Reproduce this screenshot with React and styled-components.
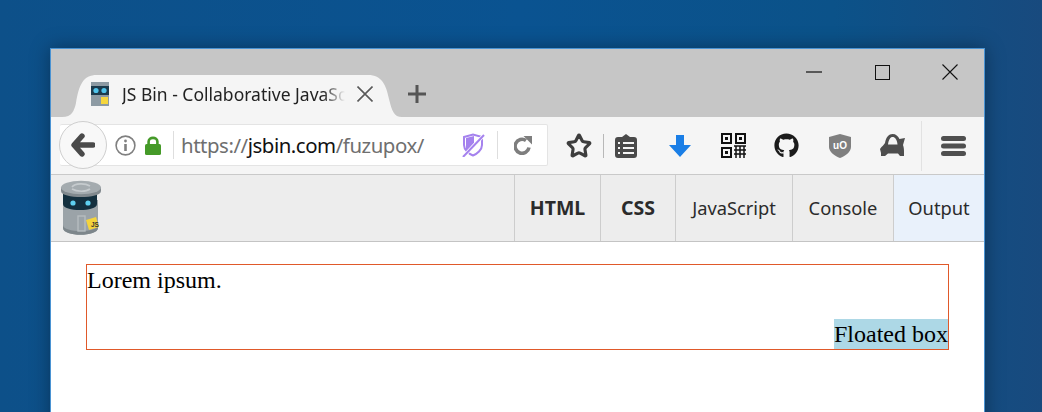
import React from 'react';
import styled, { createGlobalStyle } from 'styled-components';
import { FaGithub } from 'react-icons/fa';
import { Star } from 'lucide-react';

const Global = createGlobalStyle`
  html, body {
    margin: 0;
    padding: 0;
    height: 412px;
    overflow: hidden;
  }
`;

const Desktop = styled.div`
  width: 1042px;
  height: 412px;
  box-sizing: border-box;
  padding: 48px 0 0 50px;
  overflow: hidden;
  background: linear-gradient(90deg, #0d5089 0%, #0a5391 50%, #0b5289 80%, #184a7e 100%);
`;

const Win = styled.div`
  width: 935px;
  height: 420px;
  box-sizing: border-box;
  border: 1px solid #4a93d3;
  border-bottom: 0;
  background: #fff;
  box-shadow: 0 0 18px rgba(0, 0, 0, 0.35);
  display: flex;
  flex-direction: column;
`;

const TitleBar = styled.div`
  height: 68px;
  flex: none;
  background: #c6c6c6;
  display: flex;
  align-items: flex-end;
  padding-left: 11px;
`;

const Tab = styled.div`
  width: 340px;
  height: 42px;
  flex: none;
  box-sizing: border-box;
  background: #f5f5f5;
  clip-path: path('M0 42 C10 42 12 36 14 28 C17 10 21 0 35 0 H306 C320 0 324 10 327 24 C330 36 332 42 340 42 Z');
  display: flex;
  align-items: center;
  padding: 0 0 4px 29px;
`;

const TabTitle = styled.span`
  width: 223px;
  margin-left: 13px;
  font: 17.5px/24px 'Noto Sans', sans-serif;
  color: #222;
  white-space: nowrap;
  -webkit-mask-image: linear-gradient(90deg, #000 90%, transparent 100%);
  mask-image: linear-gradient(90deg, #000 90%, transparent 100%);
`;

const NewTab = styled.div`
  width: 28px;
  height: 42px;
  margin-left: 1px;
  display: flex;
  align-items: center;
  justify-content: center;
  padding-bottom: 4px;
  box-sizing: border-box;
`;

const WinControls = styled.div`
  margin-left: auto;
  align-self: flex-start;
  display: flex;
  padding: 14px 0 0 0;
`;

const WinBtn = styled.div`
  width: 68px;
  height: 18px;
  display: flex;
  align-items: center;
  justify-content: center;
`;

const Nav = styled.div`
  height: 58px;
  flex: none;
  box-sizing: border-box;
  background: #f5f5f5;
  border-bottom: 1px solid #c9c9c9;
  display: flex;
  align-items: center;
  padding-left: 9px;
`;

const UrlBar = styled.div`
  width: 488px;
  height: 42px;
  flex: none;
  margin-top: -1px;
  box-sizing: border-box;
  background: #fff;
  border: 1px solid #e4e4e4;
  border-left: 0;
  border-radius: 2px;
  display: flex;
  align-items: center;
`;

const Back = styled.div`
  width: 48px;
  height: 48px;
  flex: none;
  box-sizing: border-box;
  margin-left: -1px;
  border: 1px solid #cfcfcf;
  border-radius: 50%;
  background: #f8f8f8;
  display: flex;
  align-items: center;
  justify-content: center;
`;

const UrlIcons = styled.div`
  display: flex;
  align-items: center;
  gap: 9px;
  margin-left: 8px;
`;

const VLine = styled.div`
  width: 1px;
  height: ${(p) => p.$h || 28}px;
  flex: none;
  margin-left: ${(p) => p.$ml || 0}px;
  background: ${(p) => p.$c || '#dedede'};
`;

const Url = styled.div`
  width: 280px;
  margin-left: 7px;
  font: 20.4px/28px 'Noto Sans', sans-serif;
  color: #6f6f6f;
  white-space: nowrap;
  letter-spacing: -0.45px;
  b {
    font-weight: 400;
    color: #111;
  }
`;

const Slot = styled.div`
  width: ${(p) => p.$w || 53}px;
  height: 40px;
  flex: none;
  margin-left: ${(p) => p.$ml || 0}px;
  display: flex;
  align-items: center;
  justify-content: center;
`;

const BinBar = styled.div`
  height: 67px;
  flex: none;
  box-sizing: border-box;
  background: #ededed;
  border-bottom: 1px solid #c4c4c4;
  display: flex;
  justify-content: space-between;
  padding-left: 9px;
`;

const Logo = styled.div`
  padding-top: 5px;
`;

const Panels = styled.div`
  display: flex;
  height: 66px;
`;

const Panel = styled.div`
  width: ${(p) => p.$w}px;
  box-sizing: border-box;
  border-left: 1px solid #cdcdcd;
  background: ${(p) => (p.$current ? '#e9f1fb' : 'transparent')};
  font: ${(p) => (p.$on ? '700 19.5px' : '400 18.3px')}/66px 'Noto Sans', sans-serif;
  color: #2b2b2b;
  text-align: center;
`;

const Output = styled.div`
  padding: 22px 35px 0 35px;
`;

const Box = styled.div`
  height: 86px;
  box-sizing: border-box;
  border: 1px solid #e0592a;
  display: flex;
  flex-direction: column;
  justify-content: space-between;
  font: 24px/30px 'Liberation Serif', serif;
  color: #000;
`;

const Floated = styled.div`
  align-self: flex-end;
  background: lightblue;
`;

const Favicon = () => (
  <svg width="18" height="24" viewBox="0 0 18 24">
    <rect width="18" height="24" fill="#8d9aa3" />
    <rect y="4" width="18" height="9" fill="#1c3a4c" />
    <circle cx="5" cy="8.5" r="2.6" fill="#4fc3ea" />
    <circle cx="13" cy="8.5" r="2.6" fill="#4fc3ea" />
    <rect x="10" y="15" width="7" height="7" fill="#f5d63d" />
  </svg>
);

const Cross = ({ size = 16, color = '#555', w = 1.5 }) => (
  <svg width={size} height={size} viewBox="0 0 16 16">
    <path d="M0.5 0.5 L15.5 15.5 M15.5 0.5 L0.5 15.5" stroke={color} strokeWidth={w} fill="none" />
  </svg>
);

const BinLogo = () => (
  <svg width="42" height="56" viewBox="0 0 42 56">
    <path d="M3 20 V48 C3 57 38 57 38 48 V20 Z" fill="#9ba3a8" />
    <path d="M3 45 V48 C3 57 38 57 38 48 V45 C38 53 3 53 3 45 Z" fill="#7d868b" />
    <path d="M3 12 H37 V24 C37 32 3 32 3 24 Z" fill="#14303f" />
    <circle cx="13" cy="23" r="2.6" fill="#5fd0f0" />
    <circle cx="28" cy="23" r="2.6" fill="#5fd0f0" />
    <path d="M1 7 V11 C1 19 41 19 41 11 V7 Z" fill="#81898e" />
    <ellipse cx="21" cy="7.5" rx="20" ry="6.8" fill="#a4abaf" />
    <path d="M12 7 C15 3 25 3 30 6 M30 9 C26 12 17 12 12 9" stroke="#c6cbce" strokeWidth="1.6" fill="none" />
    <rect x="18" y="36" width="7" height="15" fill="none" stroke="#b6bcc0" strokeWidth="1.4" />
    <path d="M26 40 L36 37 L39 47 L29 50 Z" fill="#f4d43c" />
    <text x="31" y="47" fontSize="6.5" fontWeight="700" fontFamily="Liberation Sans, sans-serif" fill="#333">JS</text>
  </svg>
);

const App = () => (
  <Desktop>
    <Global />
    <Win>
      <TitleBar>
        <Tab>
          <Favicon />
          <TabTitle>JS Bin - Collaborative JavaSc</TabTitle>
          <Slot $w={36} $ml={2}>
            <Cross size={16} color="#5a5a5a" w={1.6} />
          </Slot>
        </Tab>
        <NewTab>
          <svg width="18" height="18" viewBox="0 0 18 18">
            <path d="M9 0 V18 M0 9 H18" stroke="#555" strokeWidth="3" />
          </svg>
        </NewTab>
        <WinControls>
          <WinBtn>
            <svg width="16" height="2" viewBox="0 0 16 2">
              <rect width="16" height="1.2" y="0.4" fill="#111" />
            </svg>
          </WinBtn>
          <WinBtn>
            <svg width="15" height="15" viewBox="0 0 15 15">
              <rect x="0.5" y="0.5" width="14" height="14" fill="none" stroke="#111" />
            </svg>
          </WinBtn>
          <WinBtn>
            <Cross size={16} color="#111" w={1.1} />
          </WinBtn>
        </WinControls>
      </TitleBar>

      <Nav>
        <UrlBar>
          <Back>
            <svg width="24" height="24" viewBox="0 0 24 24">
              <path d="M11 3 L3 12 L11 21 M4 12 H22" stroke="#4a4a4a" strokeWidth="5.4" strokeLinecap="round" strokeLinejoin="round" fill="none" />
            </svg>
          </Back>
          <UrlIcons>
            <svg width="21" height="21" viewBox="0 0 21 21">
              <circle cx="10.5" cy="10.5" r="9.4" fill="none" stroke="#808080" strokeWidth="1.6" />
              <circle cx="10.5" cy="6" r="1.4" fill="#808080" />
              <rect x="9.2" y="9" width="2.6" height="7" fill="#808080" />
            </svg>
            <svg width="16" height="19" viewBox="0 0 16 19">
              <path d="M3.6 9 V5.6 C3.6 0.6 12.4 0.6 12.4 5.6 V9" fill="none" stroke="#459a28" strokeWidth="2.6" />
              <rect y="8" width="16" height="11" rx="1.6" fill="#459a28" />
            </svg>
          </UrlIcons>
          <VLine $ml={12} />
          <Url>
            https://<b>jsbin.com</b>/fuzupox/
          </Url>
          <svg width="24" height="24" viewBox="0 0 24 24">
            <path d="M3 4 L12 1.5 L21 4 V12 C21 17 16 21 12 22.5 C8 21 3 17 3 12 Z" fill="none" stroke="#a582ee" strokeWidth="2" />
            <path d="M5 5 L13 3 V10 L5 19 Z" fill="#a582ee" />
            <path d="M2 24 L23 2" stroke="#fff" strokeWidth="3.4" />
            <path d="M2 24 L23 2" stroke="#a582ee" strokeWidth="2" />
          </svg>
          <VLine $ml={12} />
          <Slot $w={49}>
            <svg width="18" height="20" viewBox="0 0 18 20">
              <path d="M15 12.5 A7 7 0 1 1 12 5.5" fill="none" stroke="#7e7e7e" strokeWidth="3.6" />
              <path d="M9.5 1 L18 1 L18 9.5 Z" fill="#7e7e7e" />
            </svg>
          </Slot>
        </UrlBar>

        <Slot $w={38} $ml={12}>
          <Star size={26} color="#3d3d3d" strokeWidth={2.9} strokeLinejoin="round" />
        </Slot>
        <VLine $h={24} $ml={5} $c="#b8b8b8" />
        <Slot $w={44}>
          <svg width="22" height="24" viewBox="0 0 22 24">
            <path d="M11 0 L15 3 H19 Q22 3 22 6 V21 Q22 24 19 24 H3 Q0 24 0 21 V6 Q0 3 3 3 H7 Z" fill="#4a4a4a" />
            <path d="M3 9 H5 M8 9 H19 M3 14 H5 M8 14 H19 M3 19 H5 M8 19 H19" stroke="#f5f5f5" strokeWidth="2" />
          </svg>
        </Slot>
        <Slot $ml={5}>
          <svg width="22" height="22" viewBox="0 0 22 22">
            <path d="M7 0 H15 V10 H22 L11 22 L0 10 H7 Z" fill="#1a7ee6" />
          </svg>
        </Slot>
        <Slot $ml={1}>
          <svg width="25" height="25" viewBox="0 0 25 25" fill="#111">
            <path fillRule="evenodd" d="M0 0 H11 V11 H0 Z M2 2 V9 H9 V2 Z M14 0 H25 V11 H14 Z M16 2 V9 H23 V2 Z M0 14 H11 V25 H0 Z M2 16 V23 H9 V16 Z" />
            <rect x="4" y="4" width="3" height="3" />
            <rect x="18" y="4" width="3" height="3" />
            <rect x="4" y="18" width="3" height="3" />
            <path d="M13 13 H25 M13 17 H25 M13 21 H25 M15 13 V25 M19 13 V25 M23 13 V25" stroke="#111" strokeWidth="1.5" />
          </svg>
        </Slot>
        <Slot>
          <FaGithub size={25} color="#1b1b1b" />
        </Slot>
        <Slot>
          <svg width="22" height="24" viewBox="0 0 22 24">
            <path d="M11 0 L22 3 V13 C22 18 16 22 11 24 C6 22 0 18 0 13 V3 Z" fill="#7f7f7f" />
            <text x="11" y="15" textAnchor="middle" fontSize="10" fontWeight="700" fontFamily="Liberation Sans, sans-serif" fill="#fff">uO</text>
          </svg>
        </Slot>
        <Slot>
          <svg width="25" height="23" viewBox="0 0 25 23">
            <path d="M0 15 C2 12 4 11 5 9 C6 3 9 0 12.5 0 C16 0 18 2 19.5 5 L25 4 L23 11 C24 14 24 16 24 19 V22 H20 L18 19.5 H8 L5 22 H1 V19 Z" fill="#4e4e4e" />
            <path d="M8 10.5 C8.5 5.5 10.5 3 12.5 3 C15 3 17 5.5 17.5 10.5 Z" fill="#f5f5f5" />
          </svg>
        </Slot>
        <VLine $h={50} $ml={2} $c="#e2e2e2" />
        <Slot $w={62}>
          <svg width="25" height="20" viewBox="0 0 25 20" fill="#4f4f4f">
            <rect width="25" height="5" rx="2.5" />
            <rect y="7.5" width="25" height="5" rx="2.5" />
            <rect y="15" width="25" height="5" rx="2.5" />
          </svg>
        </Slot>
      </Nav>

      <BinBar>
        <Logo>
          <BinLogo />
        </Logo>
        <Panels>
          <Panel $w={86} $on>HTML</Panel>
          <Panel $w={75} $on>CSS</Panel>
          <Panel $w={117}>JavaScript</Panel>
          <Panel $w={101}>Console</Panel>
          <Panel $w={91} $current>Output</Panel>
        </Panels>
      </BinBar>

      <Output>
        <Box>
          <div>Lorem ipsum.</div>
          <Floated>Floated box</Floated>
        </Box>
      </Output>
    </Win>
  </Desktop>
);

export default App;
